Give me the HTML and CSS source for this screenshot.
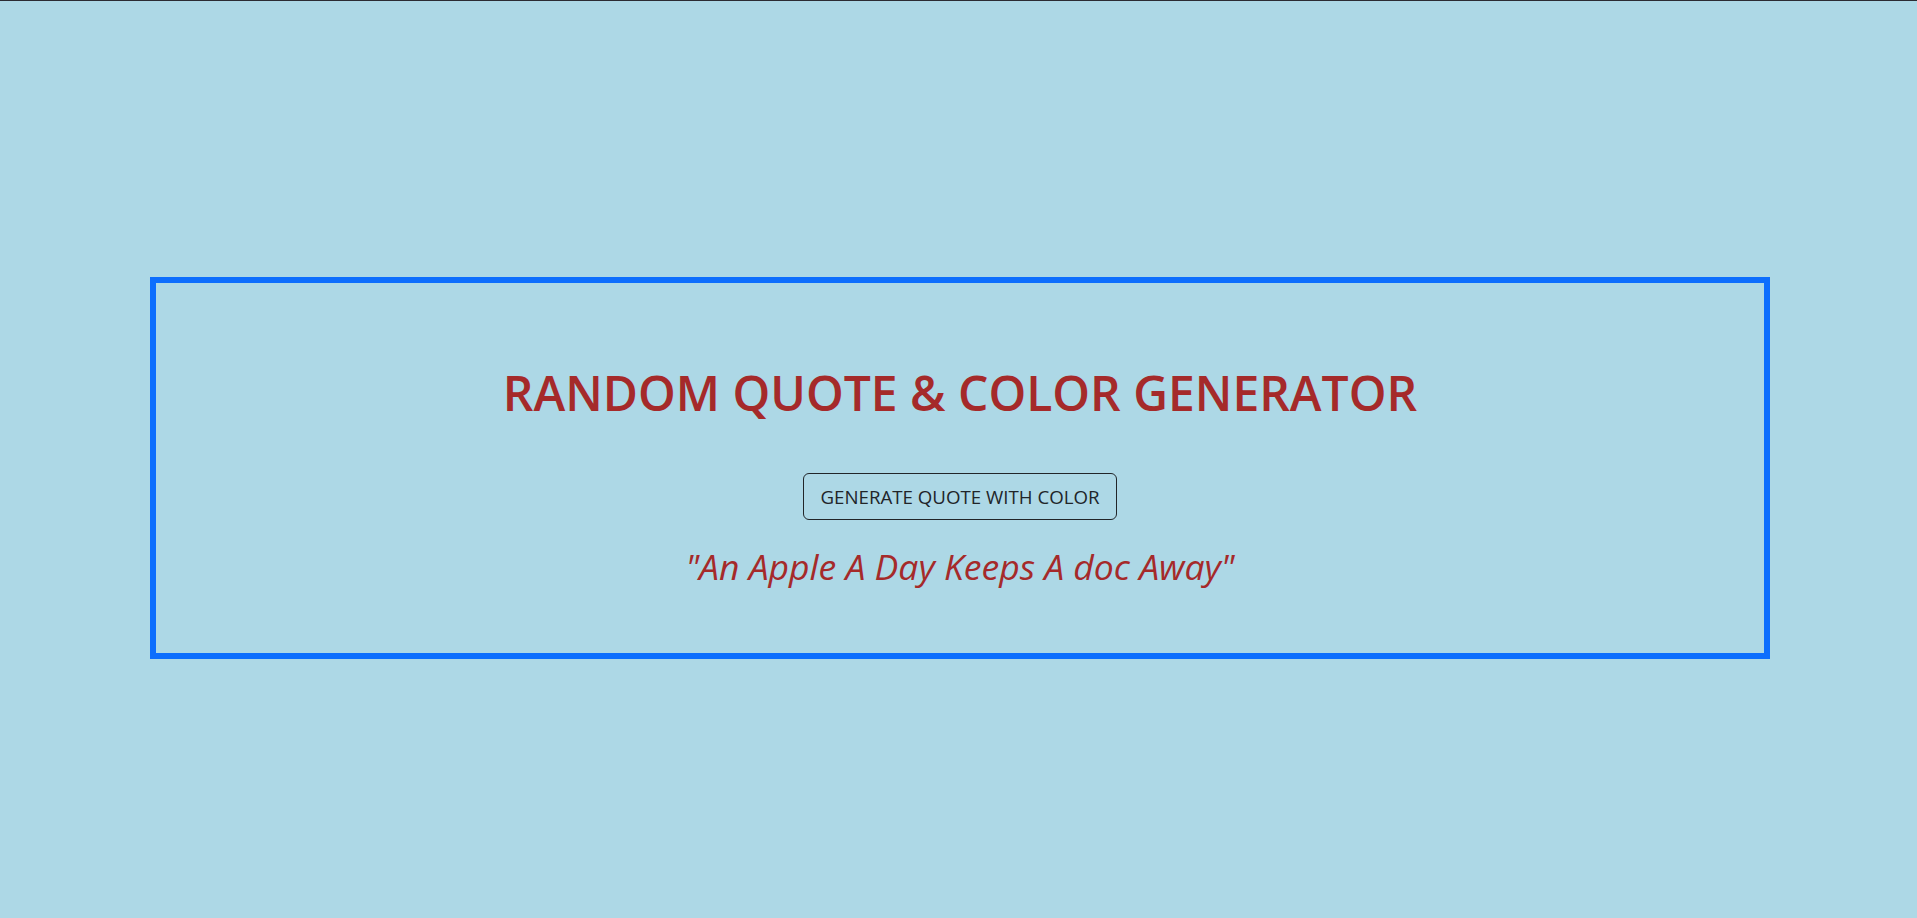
FILE: index.html
```html
<!DOCTYPE html>
<html lang="en">
<head>
<meta charset="utf-8">
<title>Random Quote &amp; Color Generator</title>
<link rel="stylesheet" href="styles.css">
</head>
<body>
<div class="page">
  <div class="card">
    <h1 class="title">RANDOM QUOTE &amp; COLOR GENERATOR</h1>
    <button class="btn" type="button">GENERATE QUOTE WITH COLOR</button>
    <p class="quote">"An Apple A Day Keeps A doc Away"</p>
  </div>
</div>
</body>
</html>
```

FILE: styles.css
```css
html, body {
  margin: 0;
  padding: 0;
}
body {
  background: #add8e6;
  border-top: 1px solid #2b2b33;
  min-height: 917px;
  font-family: "Open Sans", "Noto Sans", sans-serif;
}
.page {
  padding: 276px 147px 0 150px;
}
.card {
  border: 6px solid #0d6efd;
  display: flex;
  flex-direction: column;
  align-items: center;
  padding: 81px 0 60px;
}
.title {
  margin: 0;
  font-size: 48px;
  font-weight: 600;
  line-height: 1.2;
  color: #a52a2a;
}
.btn {
  margin-top: 51px;
  font-family: inherit;
  font-size: 18.7px;
  color: #212529;
  background: transparent;
  border: 1px solid #212529;
  border-radius: 6px;
  height: 47px;
  padding: 0 16px;
}
.quote {
  margin: 20px 0 0;
  font-size: 35.5px;
  font-style: italic;
  line-height: 1.5;
  color: #a52a2a;
}
```
